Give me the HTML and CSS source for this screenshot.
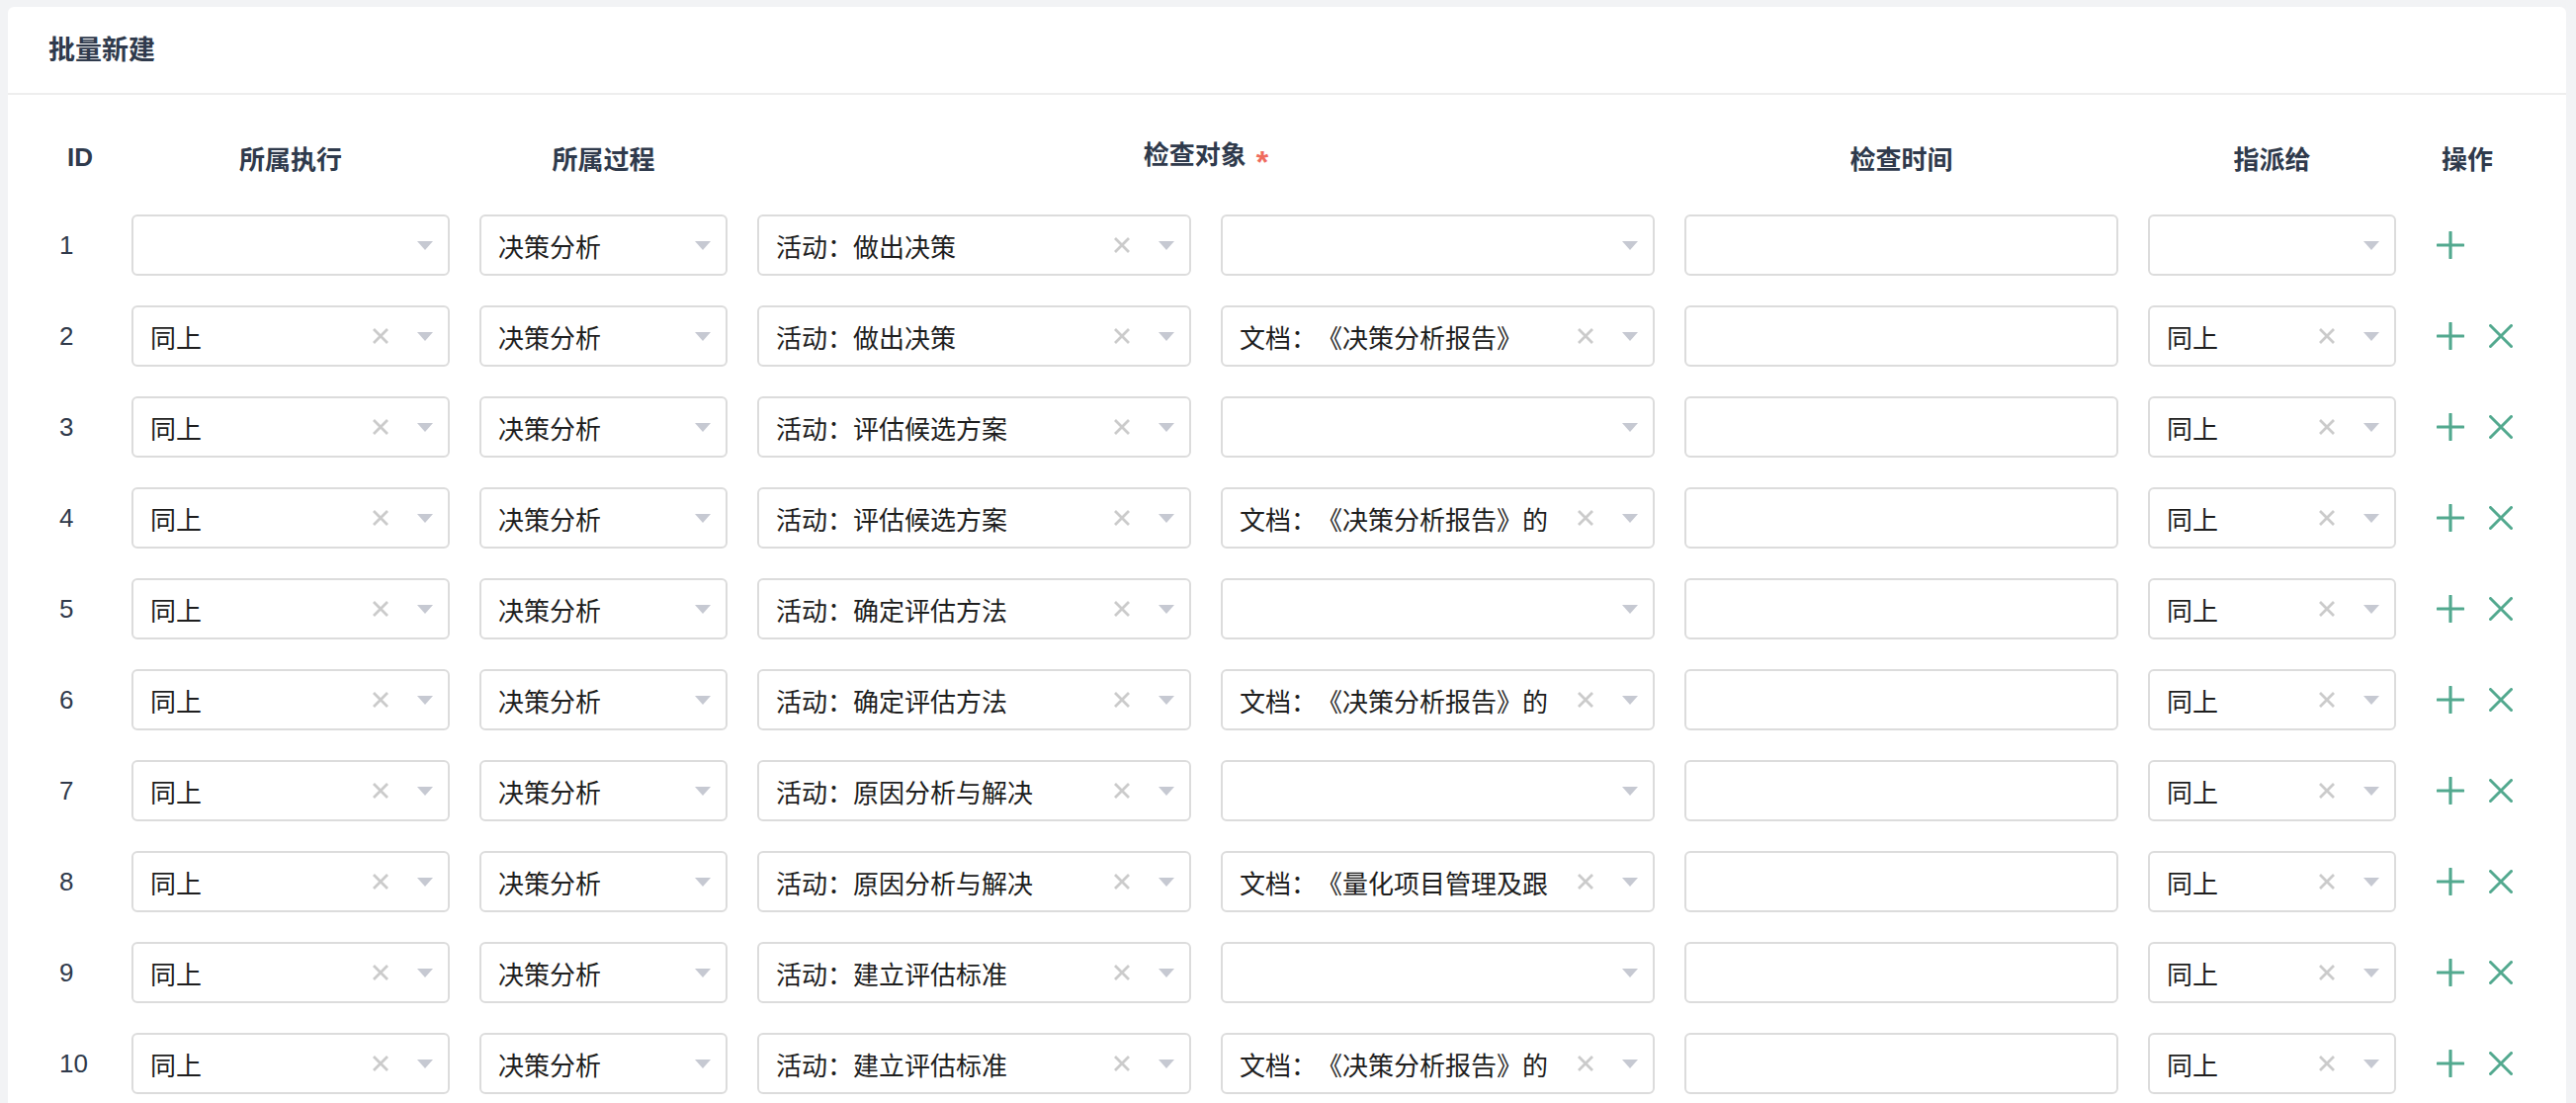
FILE: index.html
```html
<!DOCTYPE html>
<html lang="zh">
<head>
    <meta charset="UTF-8">
    <meta name="viewport" content="width=device-width, initial-scale=1.0">
    <title>批量新建</title>
    <link rel="stylesheet" href="styles.css">
</head>
<body>
    <div class="card">
        <div class="card-header">批量新建</div>
        <div class="card-body">
            <div class="grid head">
                <div class="th th-id">ID</div>
                <div class="th">所属执行</div>
                <div class="th">所属过程</div>
                <div class="th span2">检查对象<span class="required">*</span></div>
                <div class="th">检查时间</div>
                <div class="th">指派给</div>
                <div class="th">操作</div>
            </div>
            <div id="rows"></div>
        </div>
    </div>

    <script>
        const rows = [
            ['', '决策分析', '活动：做出决策', ''],
            ['同上', '决策分析', '活动：做出决策', '文档：《决策分析报告》'],
            ['同上', '决策分析', '活动：评估候选方案', ''],
            ['同上', '决策分析', '活动：评估候选方案', '文档：《决策分析报告》的'],
            ['同上', '决策分析', '活动：确定评估方法', ''],
            ['同上', '决策分析', '活动：确定评估方法', '文档：《决策分析报告》的'],
            ['同上', '决策分析', '活动：原因分析与解决', ''],
            ['同上', '决策分析', '活动：原因分析与解决', '文档：《量化项目管理及跟'],
            ['同上', '决策分析', '活动：建立评估标准', ''],
            ['同上', '决策分析', '活动：建立评估标准', '文档：《决策分析报告》的']
        ];

        const clearIcon = '<svg class="clear" width="18" height="18" viewBox="0 0 18 18"><path d="M2 2L16 16M16 2L2 16" stroke="#cbcbcb" stroke-width="2.8"/></svg>';
        const arrowIcon = '<svg class="arrow" width="16" height="9" viewBox="0 0 16 9"><path d="M0 0H16L8 9Z" fill="#c6c9d2"/></svg>';
        const plusIcon = '<svg width="28" height="28" viewBox="0 0 28 28"><path d="M14 1V27M1 14H27" stroke="#53a98f" stroke-width="3.2" stroke-linecap="round"/></svg>';
        const delIcon = '<svg width="24" height="24" viewBox="0 0 24 24"><path d="M1.5 1.5L22.5 22.5M22.5 1.5L1.5 22.5" stroke="#53a98f" stroke-width="3" stroke-linecap="round"/></svg>';

        // 下拉框，clearable 且有值时显示清除按钮
        function select(value, clearable) {
            return '<div class="select"><span class="value">' + value + '</span>' +
                (clearable && value ? clearIcon : '') + arrowIcon + '</div>';
        }

        let html = '';
        rows.forEach(function (r, i) {
            html += '<div class="grid row">' +
                '<div class="td td-id">' + (i + 1) + '</div>' +
                '<div class="td">' + select(r[0], true) + '</div>' +
                '<div class="td">' + select(r[1], false) + '</div>' +
                '<div class="td">' + select(r[2], true) + '</div>' +
                '<div class="td">' + select(r[3], true) + '</div>' +
                '<div class="td"><div class="input"></div></div>' +
                '<div class="td">' + select(r[0], true) + '</div>' +
                '<div class="td ops"><span class="op">' + plusIcon + '</span>' +
                (i > 0 ? '<span class="op">' + delIcon + '</span>' : '') + '</div>' +
                '</div>';
        });
        document.getElementById('rows').innerHTML = html;
    </script>
</body>
</html>
```

FILE: styles.css
```css
* {
    margin: 0;
    padding: 0;
    box-sizing: border-box;
}

body {
    background: #f2f3f5;
    padding: 7px 10px 0 8px;
    height: 1116px;
    overflow: hidden;
    font-family: "Liberation Sans", "Noto Sans CJK SC", sans-serif;
    color: #222;
    text-spacing-trim: space-all;
}

.card {
    background: #fff;
    border-radius: 6px;
    min-height: 1200px;
}

.card-header {
    height: 89px;
    line-height: 89px;
    padding-left: 41px;
    font-size: 27px;
    font-weight: bold;
    color: #2f3a4c;
    border-bottom: 2px solid #eeeeee;
}

.card-body {
    padding: 20px 58px 0 52px;
}

.grid {
    display: grid;
    grid-template-columns: 43px 322px 251px 439px 439px 439px 251px 84px;
    column-gap: 30px;
    align-items: center;
}

.head {
    height: 86px;
}

.th {
    text-align: center;
    font-size: 26px;
    font-weight: bold;
    color: #2f3a4c;
    white-space: nowrap;
}

.th-id {
    text-align: left;
    padding-left: 8px;
}

.span2 {
    grid-column: span 2;
}

.required {
    color: #ef6b5e;
    font-size: 32px;
    font-weight: bold;
    margin-left: 10px;
    vertical-align: -9px;
}

.row {
    height: 92px;
}

.td-id {
    font-size: 26px;
    color: #303a4b;
}

.select,
.input {
    height: 62px;
    border: 2px solid #dcdcdc;
    border-radius: 6px;
    background: #fff;
}

.select {
    display: flex;
    align-items: center;
    padding: 0 15px 0 17px;
    font-size: 26px;
    color: #1e1e1e;
}

.value {
    flex: 1;
    min-width: 0;
    overflow: hidden;
    white-space: nowrap;
}

.clear {
    flex: none;
    margin: 0 28px 0 20px;
}

.arrow {
    flex: none;
}

.ops {
    display: flex;
    align-items: center;
    padding-left: 11px;
    gap: 25px;
}

.op {
    display: flex;
    cursor: pointer;
}
```
